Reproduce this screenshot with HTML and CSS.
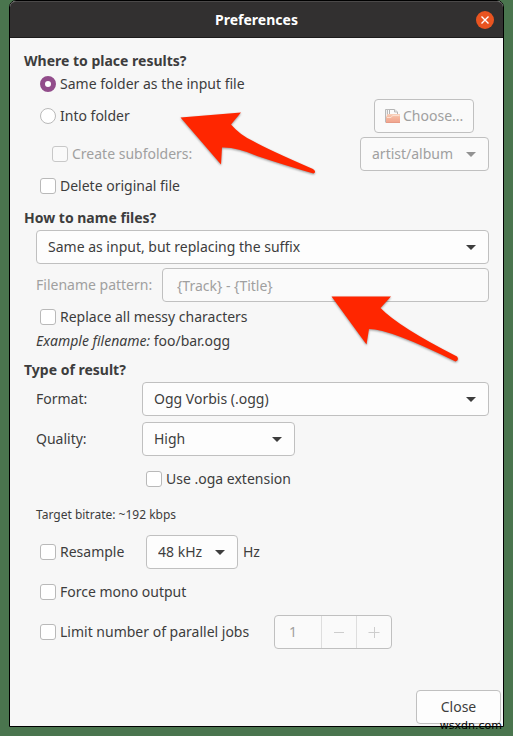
FILE: index.html
```html
<!DOCTYPE html>
<html lang="en">
<head>
<meta charset="utf-8">
<title>Preferences</title>
<meta name="viewport" content="width=device-width, initial-scale=1">
<link rel="stylesheet" href="styles.css">
</head>
<body>
<main class="window">
  <header class="titlebar">
    <h1 class="title">Preferences</h1>
    <button class="window-close" type="button" aria-label="Close window">
      <svg width="18" height="18" viewBox="0 0 18 18" aria-hidden="true"><circle cx="9" cy="9" r="9" fill="#e95420"/><path d="M5.500 5.500l7 7M12.500 5.500l-7 7" stroke="#fff" stroke-width="1.400" fill="none"/></svg>
    </button>
  </header>

  <form class="content">
    <section class="section">
      <h2 class="heading">Where to place results?</h2>
      <div class="rows">
        <label class="check"><input type="radio" name="place" checked>Same folder as the input file</label>
        <div class="row split folder-row">
          <label class="check"><input type="radio" name="place">Into folder</label>
          <button class="button choose" type="button" disabled>
            <svg width="17" height="16" viewBox="0 0 17 16" aria-hidden="true">
              <defs><linearGradient id="folder" x1="0" y1="0" x2="0" y2="1"><stop offset="0" stop-color="#f9d3bd"/><stop offset=".4" stop-color="#f5b79d"/><stop offset="1" stop-color="#f0a18c"/></linearGradient></defs>
              <path d="M1.500 14.500V1.500H6" fill="#eee" stroke="#b9b9b9"/>
              <path d="M3.500 12V1.500h3.500" fill="#fafafa" stroke="#bbb"/>
              <path d="M5.500 6.500v-5h5l3 2.500v3" fill="#fcfcfc" stroke="#b4b4b4"/>
              <path d="M10.500 1.500V4h3" fill="#eee" stroke="#bbb"/>
              <path d="M2 15V9.500L3.500 6h12.500v9z" fill="url(#folder)"/>
              <path d="M3 9.500h4l1.500-2H15.500" fill="none" stroke="#fbe0d2"/>
              <path d="M2 14.500h14" stroke="#e69b86"/>
            </svg>Choose...
          </button>
        </div>
        <div class="row split">
          <label class="check nested disabled"><input type="checkbox" disabled>Create subfolders:</label>
          <span class="dropdown disabled"><select aria-label="Subfolder layout" disabled><option>artist/album</option></select></span>
        </div>
        <label class="check"><input type="checkbox">Delete original file</label>
      </div>
    </section>

    <section class="section">
      <h2 class="heading">How to name files?</h2>
      <div class="rows">
        <span class="dropdown"><select aria-label="Naming rule"><option>Same as input, but replacing the suffix</option></select></span>
        <div class="row pattern">
          <label class="disabled" for="pattern">Filename pattern:</label>
          <input class="entry" id="pattern" type="text" value="{Track} - {Title}" disabled>
        </div>
        <label class="check"><input type="checkbox">Replace all messy characters</label>
        <p class="example"><em>Example filename:</em> foo/bar.ogg</p>
      </div>
    </section>

    <section class="section">
      <h2 class="heading">Type of result?</h2>
      <div class="result">
        <div class="fields">
          <label for="format">Format:</label>
          <span class="dropdown"><select id="format"><option>Ogg Vorbis (.ogg)</option></select></span>
          <label for="quality">Quality:</label>
          <span class="dropdown quality"><select id="quality"><option>High</option></select></span>
          <label class="check oga"><input type="checkbox">Use .oga extension</label>
        </div>
        <p class="bitrate">Target bitrate: ~192 kbps</p>
        <div class="row">
          <label class="check resample"><input type="checkbox">Resample</label>
          <span class="dropdown rate"><select aria-label="Sample rate"><option>48 kHz</option></select></span>
          <span>Hz</span>
        </div>
        <label class="check"><input type="checkbox">Force mono output</label>
        <div class="row">
          <label class="check jobs"><input type="checkbox">Limit number of parallel jobs</label>
          <div class="spinner">
            <input type="text" inputmode="numeric" value="1" aria-label="Parallel jobs" disabled>
            <button type="button" aria-label="Decrease" disabled><svg width="12" height="12" viewBox="0 0 12 12"><path d="M1 6.500h10" stroke="#cdcdcd"/></svg></button>
            <button type="button" aria-label="Increase" disabled><svg width="12" height="12" viewBox="0 0 12 12"><path d="M0.500 6.500h11M6.500 1v11" stroke="#cdcdcd"/></svg></button>
          </div>
        </div>
      </div>
    </section>
  </form>

  <footer class="actions">
    <button class="button close" type="button">Close</button>
  </footer>

  <svg class="arrow arrow-folder" width="140" height="66" viewBox="0 0 140 66" aria-hidden="true"><path d="M3.500 7.500L64 2.500L54 14.500Q63 25 76 31Q90 39 136 59Q140 62 136.500 63.500Q110 56 80 46Q60 37 45 37.500L44 54.500Z" fill="#ff2600"/></svg>
  <svg class="arrow arrow-pattern" width="134" height="74" viewBox="0 0 134 74" aria-hidden="true"><path d="M3.500 6.500H63L52.500 18Q71 37 129 66.500Q131.500 70 127.500 71.500Q62 39 41 39L38.500 54.500Z" fill="#ff2600"/></svg>
  <span class="watermark">wsxdn.com</span>
</main>
</body>
</html>
```
FILE: styles.css
```css
* {
  box-sizing: border-box;
}

body {
  margin: 0;
  min-height: 100vh;
  display: flex;
  padding: 0 9px 9px;
  background: #4a754e;
  color: #3d3d3d;
  font: 14px/20px "Noto Sans", "Open Sans", sans-serif;
}

.window {
  position: relative;
  flex: 1;
  min-width: 0;
  display: flex;
  flex-direction: column;
  border: 1px solid #000;
  border-radius: 7px 7px 0 0;
  background: #f7f7f7;
}

.titlebar {
  display: grid;
  grid-template-columns: 18px 1fr 18px;
  align-items: center;
  height: 37px;
  padding: 0 9px;
  border-top: 1px solid #4b4949;
  border-bottom: 1px solid #1c1b1b;
  border-radius: 6px 6px 0 0;
  background: #323030;
}

.title {
  grid-column: 2;
  margin: 0;
  color: #fff;
  font-size: 14px;
  line-height: 20px;
  text-align: center;
}

.window-close {
  width: 18px;
  height: 18px;
  padding: 0;
  border: 0;
  background: none;
}

svg {
  display: block;
}

.content {
  flex: 1;
  display: flex;
  flex-direction: column;
  gap: 11px;
  padding: 13px 14px 0;
}

.heading {
  margin: 0 0 2px;
  font-size: 14px;
  line-height: 20px;
}

.rows {
  display: flex;
  flex-direction: column;
  gap: 4px;
  padding-left: 12px;
}

.row {
  display: flex;
  align-items: center;
}

.split {
  justify-content: space-between;
}

.folder-row {
  padding-right: 15px;
}

.disabled {
  color: #a0a0a0;
}

.check {
  display: flex;
  align-items: center;
  gap: 4px;
  height: 22px;
  padding-left: 4px;
  white-space: nowrap;
}

.nested {
  padding-left: 16px;
}

.check input {
  appearance: none;
  width: 16px;
  height: 16px;
  margin: 0;
  border: 1px solid #b9b9b9;
  border-radius: 3px;
  background: #fff;
}

.check input:disabled {
  border-color: #c8c8c8;
  background: #fafafa;
}

.check input[type="radio"] {
  border-radius: 50%;
}

.check input[type="radio"]:checked {
  border: 5px solid #924d8b;
}

.button,
.dropdown select,
.entry,
.spinner {
  height: 34px;
  border: 1px solid #c0c0c0;
  border-radius: 4px;
  background: #fdfdfd;
  color: inherit;
  font: inherit;
}

.button {
  padding: 0 9px;
}

.button:disabled,
.dropdown select:disabled,
.entry:disabled {
  background: #fafafa;
  color: #a0a0a0;
  opacity: 1;
}

.choose {
  display: flex;
  align-items: center;
  gap: 2px;
  min-width: 100px;
}

.dropdown {
  position: relative;
  display: block;
}

.dropdown select {
  appearance: none;
  display: block;
  width: 100%;
  padding: 0 34px 0 11px;
}

.dropdown::after {
  content: "";
  position: absolute;
  top: 15px;
  right: 13px;
  border: 5px solid transparent;
  border-top-color: #3d3d3d;
  border-bottom: 0;
  pointer-events: none;
}

.dropdown.disabled::after {
  border-top-color: #929292;
}

.pattern {
  display: grid;
  grid-template-columns: 119px 1fr;
  gap: 7px;
}

.entry {
  width: 100%;
  padding: 0 14px;
}

.example,
.bitrate {
  margin: 0;
  line-height: 17px;
}

.result {
  display: flex;
  flex-direction: column;
  gap: 12px;
  padding-left: 12px;
}

.fields {
  display: grid;
  grid-template-columns: 106px 1fr;
  align-items: center;
  gap: 6px 0;
}

.quality {
  width: 153px;
}

.oga {
  grid-column: 2;
  margin-top: 6px;
}

.bitrate {
  padding-top: 4px;
  font-size: 12px;
}

.resample {
  width: 110px;
}

.rate {
  width: 92px;
  margin-right: 5px;
}

.jobs {
  width: 238px;
}

.spinner {
  display: grid;
  grid-template-columns: 46px 35px 35px;
  overflow: hidden;
  background: #fafafa;
}

.spinner input {
  width: 100%;
  padding: 0 14px;
  border: 0;
  background: none;
  color: #a0a0a0;
  font: inherit;
}

.spinner button {
  display: grid;
  place-items: center;
  padding: 0;
  border: 0;
  border-left: 1px solid #dedede;
  background: none;
}

.actions {
  display: flex;
  justify-content: flex-end;
  padding: 0 2px 2px;
}

.close {
  width: 85px;
}

.arrow {
  position: absolute;
  filter: drop-shadow(0 1px 1px #0006);
  pointer-events: none;
}

.arrow-folder {
  top: 109px;
  left: 167px;
}

.arrow-pattern {
  top: 289px;
  left: 318px;
}

.watermark {
  position: absolute;
  right: 1px;
  bottom: -7px;
  color: #000;
  font: 11px/14px "DejaVu Sans", sans-serif;
}
```
